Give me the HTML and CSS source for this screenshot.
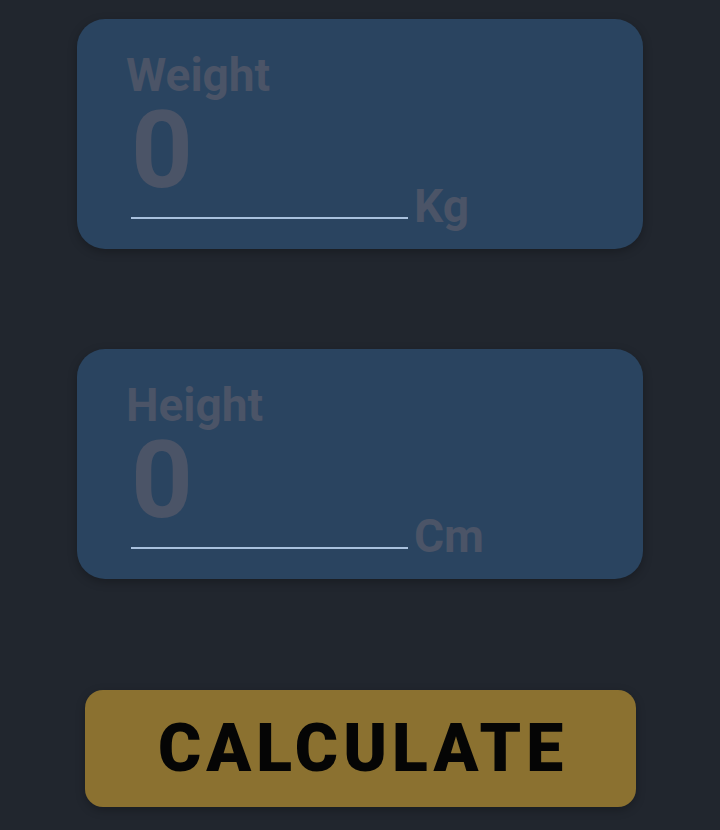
FILE: index.html
```html
<!DOCTYPE html>
<html>
<head>
<meta charset="utf-8">
<link rel="stylesheet" href="styles.css">
</head>
<body>
<main class="app">
  <section class="card">
    <div class="label">Weight</div>
    <div class="row">
      <div class="field"><span class="value">0</span></div>
      <span class="unit">Kg</span>
    </div>
  </section>
  <section class="card">
    <div class="label">Height</div>
    <div class="row">
      <div class="field"><span class="value">0</span></div>
      <span class="unit">Cm</span>
    </div>
  </section>
  <button class="calc">CALCULATE</button>
</main>
</body>
</html>
```
FILE: styles.css
```css
html, body {
  margin: 0;
  padding: 0;
  background: #21262e;
  width: 720px;
  height: 830px;
  overflow: hidden;
}
.app {
  display: flex;
  flex-direction: column;
  align-items: flex-start;
  padding-top: 19px;
  font-family: Roboto, "Liberation Sans", sans-serif;
}
.card {
  box-sizing: border-box;
  margin-left: 77px;
  width: 566px;
  height: 230px;
  padding: 33px 0 0 49px;
  border-radius: 28px;
  background: #2a4460;
  box-shadow: 0 3px 10px rgba(0, 0, 0, 0.25);
  margin-bottom: 100px;
}
.card + .card {
  margin-bottom: 111px;
}
.label {
  font-size: 46px;
  line-height: 46px;
  font-weight: 700;
  color: #4b5467;
}
.row {
  display: flex;
  align-items: flex-end;
}
.field {
  margin-left: 5px;
  width: 277px;
  padding-bottom: 15px;
  border-bottom: 2px solid #a9c1dd;
}
.value {
  display: block;
  font-size: 108px;
  line-height: 104px;
  font-weight: 700;
  color: #4b5467;
}
.unit {
  margin-left: 6px;
  margin-bottom: -10px;
  font-size: 46px;
  line-height: 46px;
  font-weight: 700;
  color: #4b5467;
}
.calc {
  margin-left: 85px;
  width: 551px;
  height: 117px;
  border: none;
  border-radius: 18px;
  background: #8b7130;
  color: #050505;
  font-family: Roboto, "Liberation Sans", sans-serif;
  font-size: 66px;
  font-weight: 900;
  letter-spacing: 5px;
  padding: 0 0 0 5px;
  box-shadow: 0 3px 10px rgba(0, 0, 0, 0.25);
}
```
